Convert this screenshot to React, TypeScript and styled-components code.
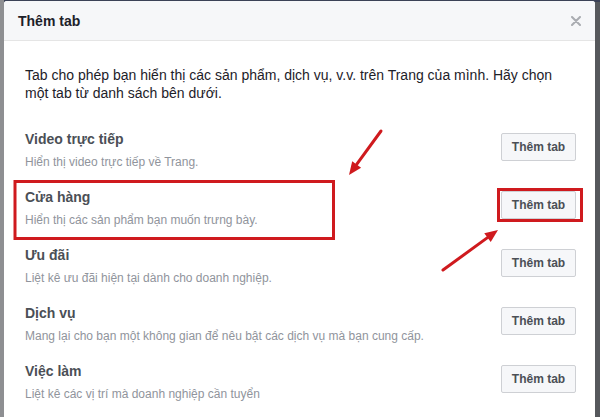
import React from 'react'
import styled, { createGlobalStyle } from 'styled-components'

const GlobalStyle = createGlobalStyle`
  html, body {
    margin: 0;
    padding: 0;
    width: 600px;
    height: 417px;
    overflow: hidden;
    background: #8c8d90;
    font-family: "Liberation Sans", Arial, Helvetica, sans-serif;
  }
`

const Page = styled.div`
  position: relative;
  display: flex;
  width: 600px;
  height: 417px;
  overflow: hidden;
  background: linear-gradient(to right, #8e8f92 0, #8e8f92 4px, transparent 4px),
    linear-gradient(to bottom, #3b4257 0, #3b4257 2px, transparent 2px), #56585c;
`

const Dialog = styled.div`
  margin: 1px 0 0 4px;
  width: 591px;
  height: 430px;
  background: #fff;
  border-radius: 3px 3px 0 0;
  display: flex;
  flex-direction: column;
`

const Header = styled.div`
  height: 39px;
  background: #f6f7f9;
  border-bottom: 1px solid #e5e5e5;
  border-radius: 3px 3px 0 0;
  display: flex;
  align-items: center;
  justify-content: space-between;
  padding: 0 12px 0 14px;
`

const Title = styled.h1`
  margin: 0;
  font-size: 14px;
  font-weight: bold;
  color: #1d2129;
`

const Close = styled.button`
  width: 14px;
  height: 14px;
  padding: 0;
  border: 0;
  background: none;
  display: flex;
  align-items: center;
  justify-content: center;
`

const Body = styled.div`
  padding: 25px 19px 0 21px;
`

const Intro = styled.p`
  margin: 0 0 16px;
  font-size: 14px;
  line-height: 18px;
  color: #1d2129;
`

const Row = styled.div`
  height: 58px;
  display: flex;
  align-items: center;
  justify-content: space-between;
`

const Info = styled.div`
  padding-top: 6px;
  display: flex;
  flex-direction: column;
  gap: 6px;
`

const RowTitle = styled.div`
  font-size: 14px;
  font-weight: bold;
  line-height: 18px;
  color: #4b4f56;
`

const RowDesc = styled.div`
  font-size: 12px;
  line-height: 16px;
  color: #90949c;
`

const AddButton = styled.button`
  width: 75px;
  height: 28px;
  padding: 0;
  background: #f6f7f9;
  border: 1px solid #ced0d4;
  border-radius: 2px;
  font-family: inherit;
  font-size: 12px;
  font-weight: bold;
  color: #4b4f56;
`

const Marks = styled.svg`
  position: absolute;
  left: 0;
  top: 0;
  pointer-events: none;
`

const tabs = [
  { title: 'Video trực tiếp', desc: 'Hiển thị video trực tiếp về Trang.' },
  { title: 'Cửa hàng', desc: 'Hiển thị các sản phẩm bạn muốn trưng bày.' },
  { title: 'Ưu đãi', desc: 'Liệt kê ưu đãi hiện tại dành cho doanh nghiệp.' },
  { title: 'Dịch vụ', desc: 'Mang lại cho bạn một không gian để nêu bật các dịch vụ mà bạn cung cấp.' },
  { title: 'Việc làm', desc: 'Liệt kê các vị trí mà doanh nghiệp cần tuyển' },
]

const red = '#cf1a1e'

const Arrow = ({ x1, y1, x2, y2 }: { x1: number; y1: number; x2: number; y2: number }) => {
  const a = Math.atan2(y2 - y1, x2 - x1)
  const len = 13
  const w = 5.5
  const bx = x2 - len * Math.cos(a)
  const by = y2 - len * Math.sin(a)
  const px = -Math.sin(a) * w
  const py = Math.cos(a) * w
  return (
    <g>
      <line x1={x1} y1={y1} x2={bx} y2={by} stroke={red} strokeWidth={3} strokeLinecap="round" />
      <polygon points={`${x2},${y2} ${bx + px},${by + py} ${bx - px},${by - py}`} fill={red} />
    </g>
  )
}

export default function App() {
  return (
    <Page>
      <GlobalStyle />
      <Dialog>
        <Header>
          <Title>Thêm tab</Title>
          <Close aria-label="Đóng">
            <svg width="10" height="10" viewBox="0 0 10 10">
              <path d="M1 1 L9 9 M9 1 L1 9" stroke="#a9acb1" strokeWidth="2" strokeLinecap="round" />
            </svg>
          </Close>
        </Header>
        <Body>
          <Intro>
            Tab cho phép bạn hiển thị các sản phẩm, dịch vụ, v.v. trên Trang của mình. Hãy chọn một tab từ danh
            sách bên dưới.
          </Intro>
          {tabs.map((t) => (
            <Row key={t.title}>
              <Info>
                <RowTitle>{t.title}</RowTitle>
                <RowDesc>{t.desc}</RowDesc>
              </Info>
              <AddButton>Thêm tab</AddButton>
            </Row>
          ))}
        </Body>
      </Dialog>
      <Marks width="600" height="417" viewBox="0 0 600 417">
        <rect x="15" y="181.5" width="318.5" height="57" fill="none" stroke={red} strokeWidth="3" />
        <rect x="498.5" y="189.5" width="83" height="31" fill="none" stroke={red} strokeWidth="3" />
        <Arrow x1={381} y1={131} x2={349} y2={175} />
        <Arrow x1={443} y1={270} x2={498} y2={230} />
      </Marks>
    </Page>
  )
}
